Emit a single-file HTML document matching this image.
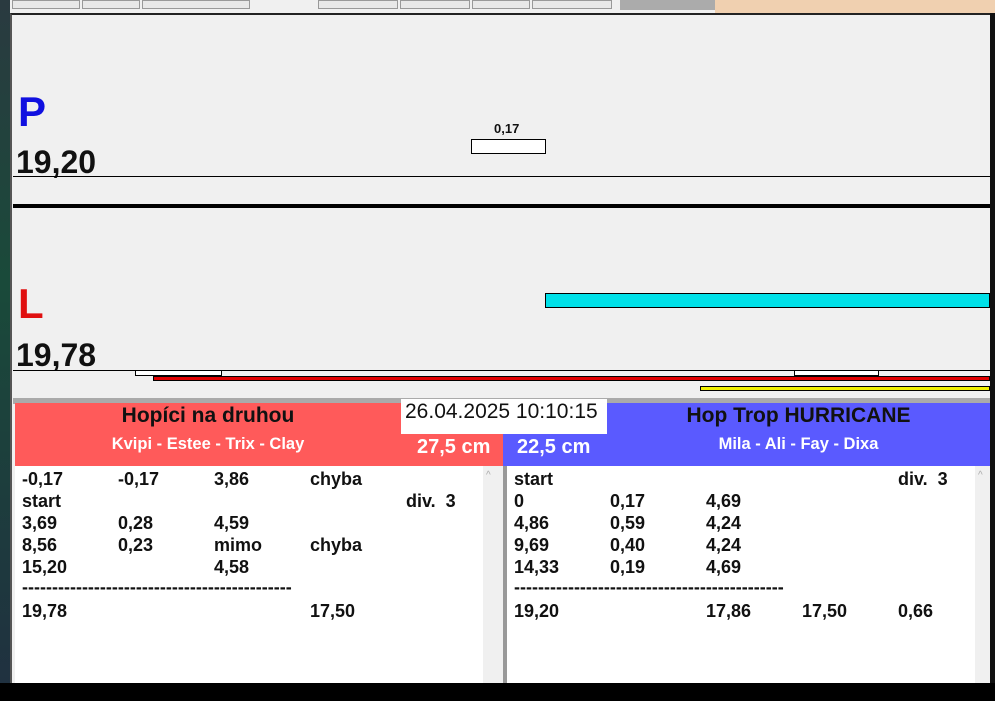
<!DOCTYPE html><html><head><meta charset="utf-8"><style>
body{margin:0;width:995px;height:701px;overflow:hidden;background:#000;position:relative;font-family:"Liberation Sans",Arial,sans-serif}
div{position:absolute;box-sizing:border-box}
.t{font-weight:bold;font-size:18px;color:#111;white-space:nowrap;line-height:20px}
.d{letter-spacing:0px}
</style></head><body>
<div style="left:0;top:0;width:10px;height:701px;background:linear-gradient(#2a3a40,#1a4a3a 40%,#203040)"></div>
<div style="left:10px;top:0;width:985px;height:13px;background:#f0f0f0"></div>
<div style="left:620px;top:0;width:95px;height:10px;background:#ababab"></div>
<div style="left:715px;top:0;width:280px;height:13px;background:#f0d0b0"></div>
<div style="left:12px;top:0;width:68px;height:9px;border:1px solid #999;background:#e8e8e8"></div>
<div style="left:82px;top:0;width:58px;height:9px;border:1px solid #999;background:#e8e8e8"></div>
<div style="left:142px;top:0;width:108px;height:9px;border:1px solid #999;background:#e8e8e8"></div>
<div style="left:318px;top:0;width:80px;height:9px;border:1px solid #999;background:#e8e8e8"></div>
<div style="left:400px;top:0;width:70px;height:9px;border:1px solid #999;background:#e8e8e8"></div>
<div style="left:472px;top:0;width:58px;height:9px;border:1px solid #999;background:#e8e8e8"></div>
<div style="left:532px;top:0;width:80px;height:9px;border:1px solid #999;background:#e8e8e8"></div>
<div style="left:10px;top:13px;width:982px;height:670px;background:#f0f0f0;border-left:2px solid #555;border-top:2px solid #222"></div>
<div style="left:990px;top:13px;width:5px;height:688px;background:#111"></div>
<div style="left:18px;top:88px;font-size:42px;font-weight:bold;color:#1010e0">P</div>
<div style="left:16px;top:144px;font-size:32px;font-weight:bold;color:#111">19,20</div>
<div style="left:13px;top:176px;width:977px;height:1px;background:#000"></div>
<div style="left:13px;top:204px;width:977px;height:4px;background:#000"></div>
<div style="left:471px;top:139px;width:75px;height:15px;border:1px solid #000;background:#fff"></div>
<div class="t" style="left:494px;top:119px;font-size:13px">0,17</div>
<div style="left:18px;top:280px;font-size:42px;font-weight:bold;color:#e01010">L</div>
<div style="left:16px;top:337px;font-size:32px;font-weight:bold;color:#111">19,78</div>
<div style="left:545px;top:293px;width:445px;height:15px;border:1px solid #000;background:#00e0e8"></div>
<div style="left:13px;top:370px;width:977px;height:1px;background:#000"></div>
<div style="left:135px;top:370px;width:87px;height:6px;border:1px solid #000;background:#fff"></div>
<div style="left:794px;top:370px;width:85px;height:6px;border:1px solid #000;background:#fff"></div>
<div style="left:153px;top:376px;width:837px;height:5px;border:1px solid #000;background:#e00000"></div>
<div style="left:700px;top:386px;width:290px;height:5px;border:1px solid #000;background:#f0f000"></div>
<div style="left:13px;top:398px;width:977px;height:6px;background:#aaa"></div>
<div style="left:15px;top:403px;width:488px;height:63px;background:#ff5a5a"></div>
<div style="left:503px;top:403px;width:487px;height:63px;background:#5a5aff"></div>
<div class="t" style="left:15px;top:405px;width:386px;text-align:center;font-size:21px;line-height:22px">Hopíci na druhou</div>
<div class="t" style="left:15px;top:434px;width:386px;text-align:center;font-size:16.5px;color:#fff">Kvipi - Estee - Trix - Clay</div>
<div class="t" style="left:607px;top:405px;width:383px;text-align:center;font-size:21px;line-height:22px">Hop Trop HURRICANE</div>
<div class="t" style="left:607px;top:434px;width:383px;text-align:center;font-size:16.5px;color:#fff">Mila - Ali - Fay - Dixa</div>
<div style="left:401px;top:399px;width:206px;height:35px;background:#fff"></div>
<div style="left:405px;top:400px;font-size:21px;color:#111;white-space:nowrap">26.04.2025 10:10:15</div>
<div class="t" style="left:417px;top:437px;font-size:20px;color:#fff">27,5 cm</div>
<div class="t" style="left:517px;top:437px;font-size:20px;color:#fff">22,5 cm</div>
<div style="left:15px;top:466px;width:468px;height:217px;background:#fff"></div>
<div style="left:483px;top:466px;width:17px;height:217px;background:#f0f0f0"></div>
<div style="left:500px;top:466px;width:3px;height:217px;background:#f0f0f0"></div>
<div style="left:503px;top:466px;width:4px;height:217px;background:#999"></div>
<div style="left:507px;top:466px;width:468px;height:217px;background:#fff"></div>
<div style="left:975px;top:466px;width:15px;height:217px;background:#f0f0f0"></div>
<div style="left:486px;top:470px;font-size:10px;color:#aaa">^</div>
<div style="left:978px;top:470px;font-size:10px;color:#aaa">^</div>
<div class="t" style="left:22px;top:469px">-0,17</div><div class="t" style="left:118px;top:469px">-0,17</div><div class="t" style="left:214px;top:469px">3,86</div><div class="t" style="left:310px;top:469px">chyba</div>
<div class="t" style="left:22px;top:491px">start</div><div class="t" style="left:406px;top:491px">div.&nbsp; 3</div>
<div class="t" style="left:22px;top:513px">3,69</div><div class="t" style="left:118px;top:513px">0,28</div><div class="t" style="left:214px;top:513px">4,59</div>
<div class="t" style="left:22px;top:535px">8,56</div><div class="t" style="left:118px;top:535px">0,23</div><div class="t" style="left:214px;top:535px">mimo</div><div class="t" style="left:310px;top:535px">chyba</div>
<div class="t" style="left:22px;top:557px">15,20</div><div class="t" style="left:214px;top:557px">4,58</div>
<div class="t d" style="left:22px;top:577px">---------------------------------------------</div>
<div class="t" style="left:22px;top:601px">19,78</div><div class="t" style="left:310px;top:601px">17,50</div>
<div class="t" style="left:514px;top:469px">start</div><div class="t" style="left:898px;top:469px">div.&nbsp; 3</div>
<div class="t" style="left:514px;top:491px">0</div><div class="t" style="left:610px;top:491px">0,17</div><div class="t" style="left:706px;top:491px">4,69</div>
<div class="t" style="left:514px;top:513px">4,86</div><div class="t" style="left:610px;top:513px">0,59</div><div class="t" style="left:706px;top:513px">4,24</div>
<div class="t" style="left:514px;top:535px">9,69</div><div class="t" style="left:610px;top:535px">0,40</div><div class="t" style="left:706px;top:535px">4,24</div>
<div class="t" style="left:514px;top:557px">14,33</div><div class="t" style="left:610px;top:557px">0,19</div><div class="t" style="left:706px;top:557px">4,69</div>
<div class="t d" style="left:514px;top:577px">---------------------------------------------</div>
<div class="t" style="left:514px;top:601px">19,20</div><div class="t" style="left:706px;top:601px">17,86</div><div class="t" style="left:802px;top:601px">17,50</div><div class="t" style="left:898px;top:601px">0,66</div>
<div style="left:0;top:683px;width:995px;height:18px;background:#000"></div>
</body></html>
